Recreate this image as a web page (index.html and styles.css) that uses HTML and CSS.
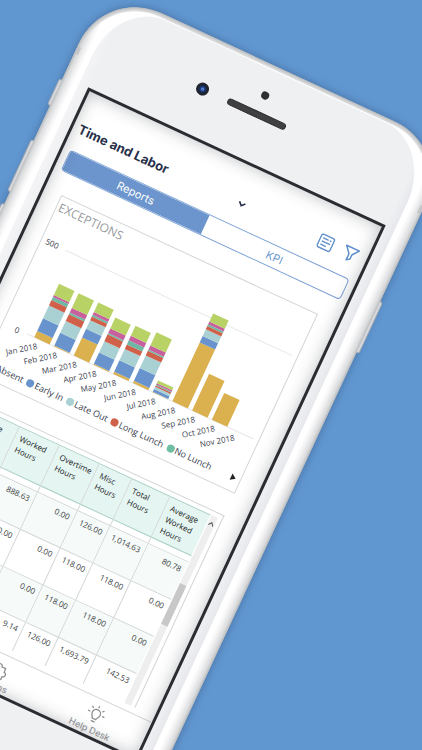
FILE: index.html
```html
<!DOCTYPE html>
<html lang="en">
<head>
<meta charset="utf-8">
<meta name="viewport" content="width=device-width, initial-scale=1">
<title>Time and Labor</title>
<link rel="stylesheet" href="styles.css">
</head>
<body>
<div class="stage">
  <div class="phone">
    <span class="side-key key-mute"></span>
    <span class="side-key key-up"></span>
    <span class="side-key key-down"></span>
    <span class="side-key key-power"></span>
    <div class="shell">
      <span class="antenna"></span>
      <div class="rim">
        <div class="face">
          <div class="sensors">
            <span class="proximity"></span>
            <span class="camera"></span>
            <span class="speaker"></span>
          </div>
          <div class="screen">
            <header class="app-header">
              <h1>Time and Labor</h1>
              <button class="icon-button" aria-label="Choose page">
                <svg width="9" height="7" viewBox="0 0 9 7"><path d="M1.3 1.7 4.6 5 7.7 1.7" fill="none" stroke="#27304a" stroke-width="1.7"/></svg>
              </button>
              <div class="actions">
                <button class="icon-button" aria-label="Report list">
                  <svg width="16" height="16" viewBox="0 0 16 16" fill="none" stroke="#5f8fcc" stroke-width="1.4" stroke-linecap="round"><rect x="1" y="1" width="14" height="14" rx="2"/><path d="M4 4.6h5M4 8h8M4 11.4h5M11.3 4.6h.7"/></svg>
                </button>
                <button class="icon-button" aria-label="Filter">
                  <svg width="16" height="16" viewBox="0 0 16 16" fill="none" stroke="#5f8fcc" stroke-width="1.5" stroke-linejoin="round"><path d="M1 1.500h14L9.700 8.200v4.300L6.600 15V8.200z"/></svg>
                </button>
              </div>
            </header>
            <nav class="segments">
              <button class="segment active">Reports</button>
              <button class="segment">KPI</button>
            </nav>
            <main class="content">
              <section class="card chart-card">
                <h2>EXCEPTIONS</h2>
                <svg class="chart" viewBox="0 0 281 156" role="img" aria-label="Exceptions by month">
                  <path d="M26 28.500H276M26 120.500H276" stroke="#e6e8e9" stroke-width="1"/>
                  <text class="axis-label" x="18" y="31">500</text>
                  <text class="axis-label" x="18" y="124">0</text>
                  <g id="bars"></g>
                </svg>
                <div class="legend">
                  <span class="key absent">Absent</span>
                  <span class="key early">Early In</span>
                  <span class="key late">Late Out</span>
                  <span class="key long">Long Lunch</span>
                  <span class="key none">No Lunch</span>
                  <button class="icon-button legend-next" aria-label="More series">
                    <svg width="6" height="8" viewBox="0 0 6 8"><path d="M.5.5 5.500 4 .5 7.500z" fill="#222"/></svg>
                  </button>
                </div>
              </section>
              <section class="card table-card">
                <div class="table-clip">
                  <table>
                    <colgroup><col class="c-name"><col class="c-wide"><col class="c-wide"><col class="c-narrow"><col class="c-total"><col></colgroup>
                    <thead>
                      <tr><th>Employee</th><th>Worked Hours</th><th>Overtime Hours</th><th>Misc Hours</th><th>Total Hours</th><th>Average Worked Hours</th></tr>
                    </thead>
                    <tbody>
                      <tr class="spacer"><td></td><td></td><td></td><td></td><td></td><td></td></tr>
                      <tr class="tint"><td></td><td>888.63</td><td>0.00</td><td>126.00</td><td>1,014.63</td><td>80.78</td></tr>
                      <tr><td></td><td>0.00</td><td>0.00</td><td>118.00</td><td>118.00</td><td>0.00</td></tr>
                      <tr class="tint"><td></td><td>0.00</td><td>0.00</td><td>118.00</td><td>118.00</td><td>0.00</td></tr>
                      <tr><td></td><td>1,558.65</td><td>9.14</td><td>126.00</td><td>1,693.79</td><td>142.53</td></tr>
                    </tbody>
                  </table>
                </div>
                <div class="scrollbar">
                  <svg width="7" height="7" viewBox="0 0 7 7"><path d="M1 5 3.500 2 6 5" fill="none" stroke="#555" stroke-width="1"/></svg>
                  <span class="thumb"></span>
                </div>
              </section>
            </main>
            <nav class="tabbar">
              <a href="#home">
                <svg width="20" height="20" viewBox="0 0 20 20" fill="none" stroke="#8d8f92" stroke-width="1.3"><path d="M3 9l7-6 7 6v8H3z"/></svg>
                Home
              </a>
              <a href="#actions">
                <svg width="20" height="20" viewBox="0 0 20 20" fill="none" stroke="#8d8f92" stroke-width="1.3" stroke-linejoin="round"><path d="M3 6h4.200a2.300 2.300 0 1 1 4.600 0H16v4.200a2.300 2.300 0 1 1 0 4.600V18H3z"/></svg>
                Actions
              </a>
              <a href="#help">
                <svg width="20" height="20" viewBox="0 0 20 20" fill="none" stroke="#8d8f92" stroke-width="1.3" stroke-linecap="round"><path d="M8 14.500c0-2-2.300-2.800-2.300-5.600a4.300 4.300 0 0 1 8.600 0c0 2.800-2.300 3.600-2.300 5.600zM8.400 17.200h3.200M10 1v1.300M3.800 3.500l1 1M16.200 3.500l-1 1M1.500 9h1.500M17 9h1.500"/></svg>
                Help Desk
              </a>
            </nav>
          </div>
        </div>
      </div>
    </div>
  </div>
</div>
<script src="chart.js"></script>
</body>
</html>
```
FILE: styles.css
```css
* {
  box-sizing: border-box;
}

body {
  margin: 0;
  background: #6197d1;
  font-family: Inter, "Liberation Sans", sans-serif;
}

button {
  margin: 0;
  padding: 0;
  border: 0;
  background: none;
  font: inherit;
  color: inherit;
}

svg {
  display: block;
}

.stage {
  height: 100vh;
  overflow: hidden;
}

/* Device */

.phone {
  position: relative;
  width: 382px;
  transform: translate(105px, -13px) rotate(24.9deg);
  transform-origin: 0 0;
}

.shell {
  position: relative;
  padding: 4px;
  border-radius: 62px;
  background: #e6e7e8;
  box-shadow: inset 0 0 4px 1px #a3a5a7, 0 0 8px rgba(30, 50, 80, 0.4);
}

.antenna {
  position: absolute;
  top: 65px;
  left: 1px;
  right: 1px;
  height: 8px;
  background: #c3c5c7;
}

.rim {
  position: relative;
  padding: 1px 13px;
  border-radius: 58px;
  background: linear-gradient(to right, #dedfe1, #f2f2f3 4px, #ffffff 8px, #ffffff 366px, #f2f2f3 370px, #dedfe1);
}

.face {
  padding: 0 10px 102px;
  border-radius: 52px / 64px;
  background: linear-gradient(to right, #f4f4f6, #eff0f2 10px, #eff0f2 338px, #e6e8ec);
}

.side-key {
  position: absolute;
  width: 5px;
  height: 57px;
  left: -3px;
  border: 1px solid #b9bbbe;
  border-radius: 3px;
  background: #fafafa;
}

.key-mute {
  top: 102px;
  height: 29px;
}

.key-up {
  top: 169px;
}

.key-down {
  top: 239px;
}

.key-power {
  top: 169px;
  left: auto;
  right: -3px;
}

.sensors {
  display: grid;
  grid-template-columns: 1fr 64px 1fr;
  justify-items: center;
  align-items: center;
  row-gap: 10px;
  padding: 22px 0 40px;
}

.proximity {
  grid-column: 2;
  width: 8px;
  height: 8px;
  border-radius: 50%;
  background: #2f2f32;
}

.camera {
  grid-column: 1;
  justify-self: end;
  margin-right: 21px;
  width: 13px;
  height: 13px;
  border-radius: 50%;
  background: radial-gradient(circle, #5d7fc4 0 1px, #1d3f8c 2px, #16306e 3px, #20242e 4px);
}

.speaker {
  width: 64px;
  height: 7px;
  border: 1px solid #262628;
  border-radius: 4px;
  background: #404042;
}

/* Screen */

.screen {
  position: relative;
  display: flex;
  flex-direction: column;
  height: 591px;
  border: 3px solid #2b2c31;
  background: #ffffff;
}

.screen::after {
  content: "";
  position: absolute;
  inset: 0;
  box-shadow: inset 0 0 16px rgba(40, 45, 55, 0.3);
  pointer-events: none;
}

.app-header {
  display: grid;
  grid-template-columns: 57% auto 1fr;
  align-items: center;
  padding: 29px 9px 14px 6px;
}

h1 {
  margin: 0;
  font-size: 13px;
  line-height: 18px;
  font-weight: 700;
  color: #27304a;
}

.actions {
  display: flex;
  justify-content: flex-end;
  gap: 11px;
}

.segments {
  display: flex;
  height: 23px;
  margin: 0 7px;
  border: 1px solid #7ba1d5;
  border-radius: 4px;
  overflow: hidden;
  font-size: 11px;
  color: #6b95cc;
}

.segment {
  flex: 1;
}

.segment.active {
  background: #6b95cc;
  color: #ffffff;
}

.content {
  flex: 1;
  min-height: 0;
  display: flex;
  flex-direction: column;
  gap: 24px;
  padding: 22px 21px 6px 18px;
  font-family: "Open Sans", "Noto Sans", sans-serif;
}

.card {
  border: 1px solid #d3d5d7;
}

.chart-card {
  padding: 3px 0 5px;
}

h2 {
  margin: 0;
  padding-left: 2px;
  font-size: 12px;
  line-height: 16px;
  font-weight: 400;
  color: #96999c;
}

.chart {
  width: 100%;
}

.axis-label,
.month-label {
  font-size: 8px;
  text-anchor: end;
  fill: #3a404e;
}

.legend {
  display: flex;
  align-items: center;
  gap: 4px;
  padding: 0 4px;
  font-size: 9px;
  line-height: 16px;
  color: #3a404e;
  white-space: nowrap;
}

.key {
  display: flex;
  align-items: center;
  gap: 1px;
}

.key::before {
  content: "";
  width: 8px;
  height: 8px;
  border-radius: 50%;
  background: currentColor;
}

.absent::before {
  background: #dbb14f;
}

.early::before {
  background: #6893cd;
}

.late::before {
  background: #a9d1d3;
}

.long::before {
  background: #cf614b;
}

.none::before {
  background: #6fbfa4;
}

.legend-next {
  margin-left: auto;
}

.table-card {
  flex: 1;
  min-height: 0;
  display: flex;
  gap: 1px;
  padding: 4px 4px 0 3px;
  border-bottom: 0;
}

.table-clip {
  flex: 1;
  overflow: hidden;
}

table {
  width: 100%;
  table-layout: fixed;
  border-collapse: separate;
  border-spacing: 0;
  font-size: 8px;
  line-height: 12px;
  color: #393d41;
}

.c-name {
  width: 56px;
}

.c-wide {
  width: 44px;
}

.c-narrow {
  width: 36px;
}

.c-total {
  width: 42px;
}

th,
td {
  vertical-align: top;
  border-right: 1px solid #d3d7d8;
}

th:last-child,
td:last-child {
  border-right: 0;
}

th {
  padding: 4px 2px 4px 5px;
  border-top: 1px solid #a9cfc4;
  border-bottom: 1px solid #a9cfc4;
  background: #e5f5f1;
  text-align: left;
  font-weight: 500;
  color: #202427;
}

td {
  height: 41px;
  padding: 3px 4px 4px 0;
  border-bottom: 1px solid #d3d7d8;
  text-align: right;
}

.spacer td {
  height: 7px;
  padding: 0;
}

.tint td {
  background: #f6fbfa;
}

.scrollbar {
  width: 7px;
  padding-top: 5px;
  background: #eeeeee;
}

.thumb {
  display: block;
  height: 45px;
  margin-top: 63px;
  background: #c8c8c8;
}

.tabbar {
  display: grid;
  grid-template-columns: 1fr 1fr 1fr;
  border-top: 1px solid #d9dadc;
}

.tabbar a {
  display: flex;
  flex-direction: column;
  align-items: center;
  padding: 6px 0 0;
  font-size: 9px;
  line-height: 12px;
  font-weight: 500;
  color: #97999c;
  text-decoration: none;
}

.icon-button {
  display: block;
}
```
FILE: chart.js
```js
// Segment heights per month, bottom to top, in the order of COLORS.
const COLORS = ["#dbb14f", "#6893cd", "#a9d1d3", "#d0604a", "#6db8a4", "#c8609e", "#b9d266"];
const DATA = [
  ["Jan", [7, 14, 14, 6, 3.5, 2, 12.5]],
  ["Feb", [1, 14, 13, 7.5, 2, 5, 16]],
  ["Mar", [20, 9.5, 9.5, 4, 2, 3, 10.5]],
  ["Apr", [1, 12.5, 12.5, 7.5, 1.5, 5, 12]],
  ["May", [2.5, 12.5, 12.5, 5, 4.5, 5, 11]],
  ["Jun", [2.5, 14, 14, 5, 1.5, 4.5, 14.5]],
  ["Jul", [0.5, 3, 2.5, 1.5, 1, 1.5, 3]],
  ["Aug", [65, 7, 7.5, 3.5, 2, 3, 9]],
  ["Sep", [40.5]],
  ["Oct", [29.5]],
  ["Nov", []]
];
const LEFT = 34.3, PITCH = 21.75, WIDTH = 17, BASE = 120.5;
const group = document.getElementById("bars");

function add(name, attributes) {
  const node = document.createElementNS("http://www.w3.org/2000/svg", name);
  for (const key in attributes) node.setAttribute(key, attributes[key]);
  group.appendChild(node);
  return node;
}

DATA.forEach(([month, parts], i) => {
  const x = LEFT + i * PITCH;
  let y = BASE;
  parts.forEach((height, k) => {
    y -= height;
    add("rect", { x, y, width: WIDTH, height, fill: COLORS[k] });
  });
  const lx = x + 8, ly = BASE + 9;
  add("text", { class: "month-label", x: lx, y: ly, transform: `rotate(-36 ${lx} ${ly})` }).textContent = month + " 2018";
});
```
